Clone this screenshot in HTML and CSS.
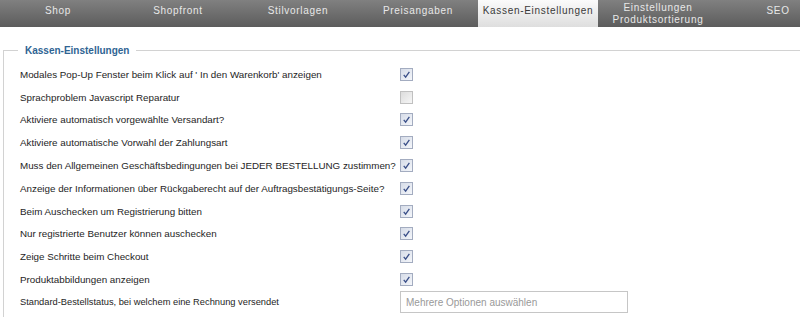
FILE: index.html
```html
<!DOCTYPE html>
<html lang="de">
<head>
    <meta charset="UTF-8">
    <title>Kassen-Einstellungen</title>
    <link rel="stylesheet" href="styles.css">
</head>
<body>
    <nav class="tabs">
        <a class="tab">Shop</a>
        <a class="tab">Shopfront</a>
        <a class="tab">Stilvorlagen</a>
        <a class="tab">Preisangaben</a>
        <a class="tab active">Kassen-Einstellungen</a>
        <a class="tab two-line">Einstellungen<br>Produktsortierung</a>
        <a class="tab">SEO</a>
    </nav>

    <fieldset class="settings">
        <legend>Kassen-Einstellungen</legend>

        <div class="row">
            <span class="label">Modales Pop-Up Fenster beim Klick auf ' In den Warenkorb' anzeigen</span>
            <span class="check on"><svg viewBox="0 0 10 10"><path d="M2.5 5.3 L4.2 7.4 L7.6 2.6"/></svg></span>
        </div>
        <div class="row">
            <span class="label">Sprachproblem Javascript Reparatur</span>
            <span class="check"></span>
        </div>
        <div class="row">
            <span class="label">Aktiviere automatisch vorgewählte Versandart?</span>
            <span class="check on"><svg viewBox="0 0 10 10"><path d="M2.5 5.3 L4.2 7.4 L7.6 2.6"/></svg></span>
        </div>
        <div class="row">
            <span class="label">Aktiviere automatische Vorwahl der Zahlungsart</span>
            <span class="check on"><svg viewBox="0 0 10 10"><path d="M2.5 5.3 L4.2 7.4 L7.6 2.6"/></svg></span>
        </div>
        <div class="row">
            <span class="label">Muss den Allgemeinen Geschäftsbedingungen bei JEDER BESTELLUNG zustimmen?</span>
            <span class="check on"><svg viewBox="0 0 10 10"><path d="M2.5 5.3 L4.2 7.4 L7.6 2.6"/></svg></span>
        </div>
        <div class="row">
            <span class="label">Anzeige der Informationen über Rückgaberecht auf der Auftragsbestätigungs-Seite?</span>
            <span class="check on"><svg viewBox="0 0 10 10"><path d="M2.5 5.3 L4.2 7.4 L7.6 2.6"/></svg></span>
        </div>
        <div class="row">
            <span class="label">Beim Auschecken um Registrierung bitten</span>
            <span class="check on"><svg viewBox="0 0 10 10"><path d="M2.5 5.3 L4.2 7.4 L7.6 2.6"/></svg></span>
        </div>
        <div class="row">
            <span class="label">Nur registrierte Benutzer können auschecken</span>
            <span class="check on"><svg viewBox="0 0 10 10"><path d="M2.5 5.3 L4.2 7.4 L7.6 2.6"/></svg></span>
        </div>
        <div class="row">
            <span class="label">Zeige Schritte beim Checkout</span>
            <span class="check on"><svg viewBox="0 0 10 10"><path d="M2.5 5.3 L4.2 7.4 L7.6 2.6"/></svg></span>
        </div>
        <div class="row">
            <span class="label">Produktabbildungen anzeigen</span>
            <span class="check on"><svg viewBox="0 0 10 10"><path d="M2.5 5.3 L4.2 7.4 L7.6 2.6"/></svg></span>
        </div>
        <div class="row">
            <span class="label small">Standard-Bestellstatus, bei welchem eine Rechnung versendet</span>
            <input class="multi" type="text" placeholder="Mehrere Optionen auswählen">
        </div>
    </fieldset>
</body>
</html>
```

FILE: styles.css
```css
body {
    margin: 0;
    font-family: "Liberation Sans", Arial, sans-serif;
    color: #222;
    background: #fff;
    overflow: hidden;
}

.tabs {
    display: flex;
    height: 27px;
    margin-left: -2px;
    background: linear-gradient(#808080, #5c5c5c);
}

.tab {
    flex: 0 0 120px;
    box-sizing: border-box;
    padding-top: 5px;
    text-align: center;
    font-size: 10px;
    line-height: 12px;
    letter-spacing: 0.7px;
    color: #e8e8e8;
}

.tab.two-line {
    padding-top: 2px;
}

.tab.active {
    color: #3a3a3a;
    background: linear-gradient(#fbfbfb, #dedede);
}

.settings {
    margin: 18px -30px 0 3px;
    padding: 7px 0 0 16px;
    border: 1px solid #d2d2d2;
    border-bottom: none;
    min-height: 264px;
}

.settings legend {
    margin-left: -2px;
    padding: 0 7px;
    font-size: 10px;
    font-weight: bold;
    color: #2f6493;
}

.row {
    display: flex;
    align-items: center;
    height: 22.8px;
}

.label {
    flex: 0 0 380px;
    font-size: 9.8px;
    white-space: nowrap;
    color: #1e1e1e;
}

.label.small {
    font-size: 9.3px;
}

.check {
    width: 11px;
    height: 11px;
    border: 1px solid #c0c0c0;
    background: linear-gradient(135deg, #dcdcdc, #f6f6f6);
}

.check.on {
    border-color: #a3acc0;
    background: linear-gradient(135deg, #d6dce8, #f4f6fa);
}

.check svg {
    display: block;
    width: 11px;
    height: 11px;
    fill: none;
    stroke: #3a4f88;
    stroke-width: 1.2;
}

.multi {
    width: 228px;
    height: 22px;
    box-sizing: border-box;
    margin: 0;
    padding: 0 5px;
    border: 1px solid #c6c6c6;
    font-family: "Liberation Sans", Arial, sans-serif;
    font-size: 10px;
}

.multi::placeholder {
    color: #999;
}
```
